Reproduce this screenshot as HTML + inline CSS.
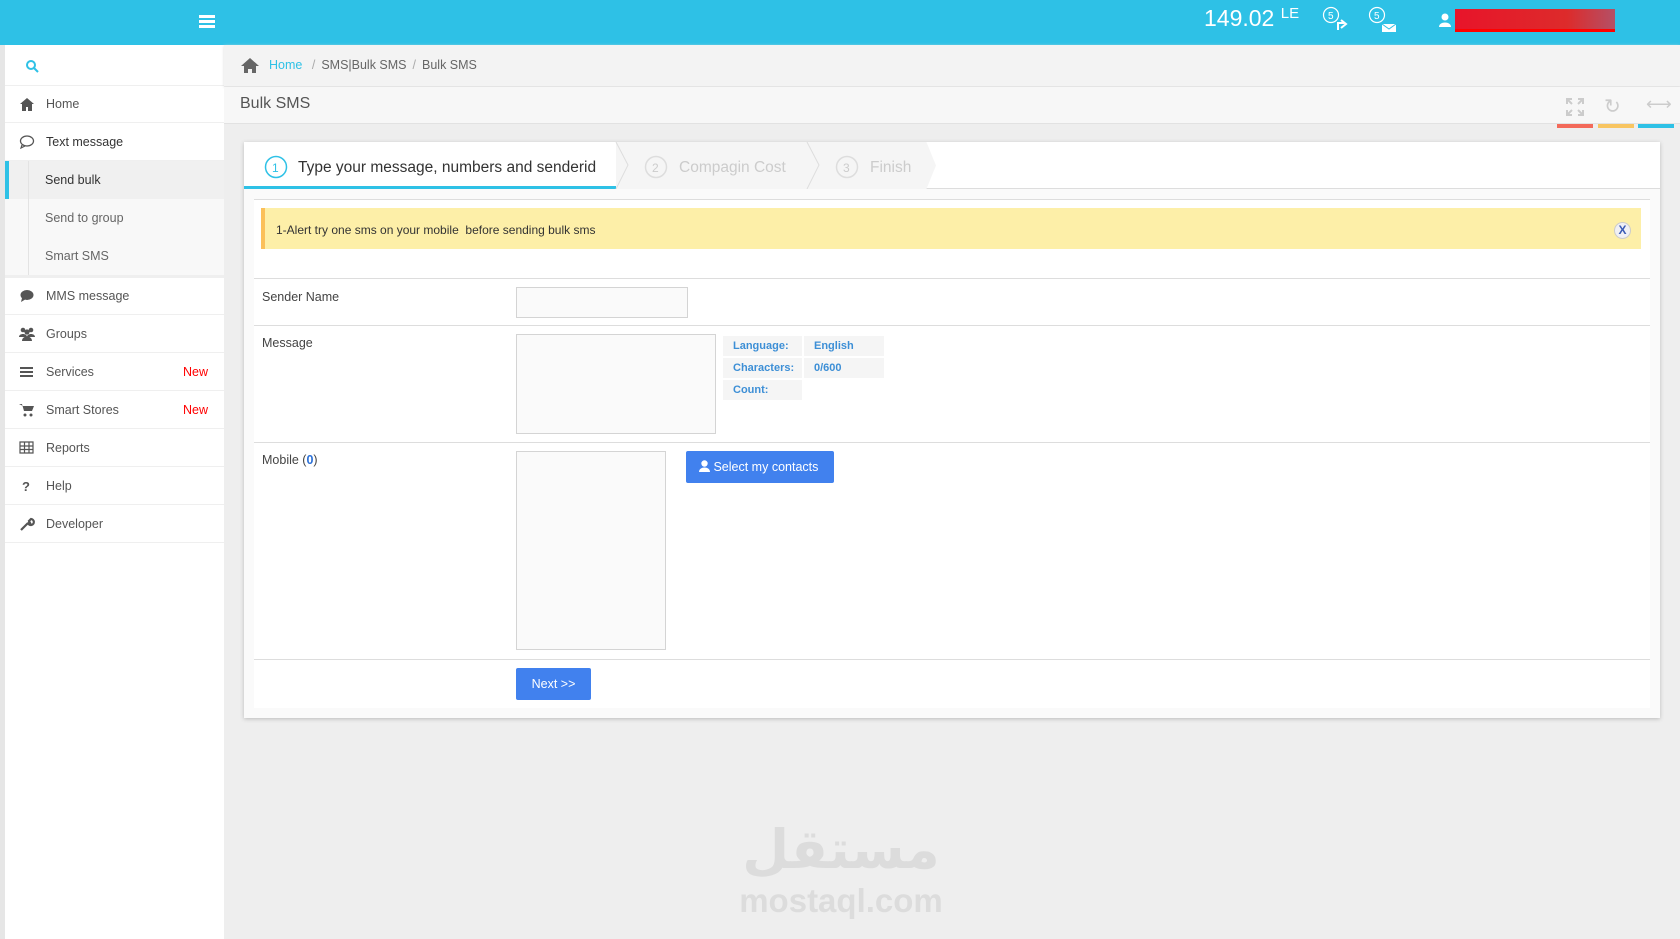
<!DOCTYPE html>
<html><head><meta charset="utf-8"><style>
*{margin:0;padding:0;box-sizing:border-box}
body{width:1680px;height:939px;overflow:hidden;background:#eeeeee;font-family:"Liberation Sans",sans-serif;font-size:12.5px;color:#555;position:relative}
.abs{position:absolute}
#hdr{left:0;top:0;width:1680px;height:45px;background:#2ec1e6}
#side{left:0;top:45px;width:224px;height:894px;background:#fff;border-left:5px solid #e6e6e6}
.it{position:absolute;left:0;width:219px;height:38px;border-bottom:1px solid #efefef;line-height:38px;padding-left:41px;color:#555}
.it svg{position:absolute;left:14px;top:12px}
.new{position:absolute;right:16px;color:#f00}
.sub{position:absolute;left:0;width:219px;height:38px;line-height:38px;padding-left:40px;color:#666;background:#f8f8f8}
.row{position:absolute;left:254px;width:1396px;border-top:1px solid #ddd}
.lbl{position:absolute;left:262px;color:#444}
.inp{position:absolute;background:#fafafa;border:1px solid #d4d4d4}
.cell{position:absolute;background:#f5f5f5;color:#3d8fd6;font-weight:bold;font-size:11px;line-height:20px;padding-left:10px}
</style></head><body>
<div id="hdr" class="abs">
 <div class="abs" style="left:199px;top:15px;width:16px;height:3px;background:#fff;box-shadow:0 5px 0 #fff,0 10px 0 #fff"></div>
 <div class="abs" style="left:1204px;top:5px;color:#fff;font-size:23px">149.02 <sup style="font-size:15px;vertical-align:8px">LE</sup></div>
 <svg class="abs" style="left:1322px;top:6px" width="30" height="26"><circle cx="9" cy="9" r="7.5" fill="none" stroke="#fff" stroke-width="1.2"/><text x="6" y="13" font-size="10" fill="#fff" font-family="Liberation Sans">5</text><path d="M16 24v-7h6M19 14l5 4-5 4" fill="none" stroke="#fff" stroke-width="2"/></svg>
 <svg class="abs" style="left:1368px;top:6px" width="30" height="26"><circle cx="9" cy="9" r="7.5" fill="none" stroke="#fff" stroke-width="1.2"/><text x="6" y="13" font-size="10" fill="#fff" font-family="Liberation Sans">5</text><path d="M14 18h14v8H14z" fill="#fff"/><path d="M14 18l7 5 7-5" stroke="#2ec1e6" fill="none"/></svg>
 <svg class="abs" style="left:1439px;top:13px" width="12" height="14"><circle cx="6" cy="4" r="3.5" fill="#fff"/><path d="M0 14c0-6 12-6 12 0z" fill="#fff"/></svg>
 <div class="abs" style="left:1455px;top:9px;width:160px;height:23px;background:linear-gradient(90deg,#e8142a,#dd2b2b 70%,#b45066);border-bottom:3px solid #f00"></div>
</div>
<div id="side" class="abs">
 <svg class="abs" style="left:20px;top:14px" width="14" height="14"><circle cx="6" cy="6" r="4" fill="none" stroke="#2ec1e6" stroke-width="2"/><path d="M9 9l4 4" stroke="#2ec1e6" stroke-width="2"/></svg>
 <div class="abs" style="left:0;top:40px;width:219px;border-top:1px solid #efefef"></div>
 <div class="it" style="top:40px"><svg width="16" height="14"><path d="M8 1l7 6h-2v7h-4v-4H7v4H3V7H1z" fill="#555"/></svg>Home</div>
 <div class="it" style="top:78px;color:#333"><svg width="16" height="14"><ellipse cx="8" cy="6" rx="6.5" ry="5" fill="none" stroke="#555" stroke-width="1.3"/><path d="M3 10l-1 3 4-2" fill="none" stroke="#555" stroke-width="1.2"/></svg>Text message</div>
 <div class="sub" style="top:116px;background:#f0f0f0;color:#333;border-left:4px solid #2ec1e6;padding-left:36px">Send bulk</div>
 <div class="sub" style="top:154px">Send to group</div>
 <div class="sub" style="top:192px">Smart SMS</div>
 <div class="abs" style="left:23px;top:116px;height:114px;border-left:1px solid #e3e3e3"></div>
 <div class="abs" style="left:0;top:230px;width:219px;height:3px;background:#efefef"></div>
 <div class="it" style="top:232px"><svg width="16" height="14"><ellipse cx="8" cy="6" rx="6.5" ry="5" fill="#555"/><path d="M3 9l-1 4 5-3" fill="#555"/></svg>MMS message</div>
 <div class="it" style="top:270px"><svg width="16" height="14"><circle cx="4" cy="3" r="2.3" fill="#555"/><circle cx="12" cy="3" r="2.3" fill="#555"/><circle cx="8" cy="5" r="2.6" fill="#555"/><path d="M0 10c0-4 8-4 8 0zM8 10c0-4 8-4 8 0zM3 14c0-6 10-6 10 0z" fill="#555"/></svg>Groups</div>
 <div class="it" style="top:308px"><svg width="16" height="14"><path d="M1 3h13M1 7h13M1 11h13" stroke="#555" stroke-width="2"/></svg>Services<span class="new">New</span></div>
 <div class="it" style="top:346px"><svg width="16" height="14"><path d="M0 1h3l2 7h8l2-5H4" fill="#555"/><circle cx="6" cy="12" r="1.5" fill="#555"/><circle cx="12" cy="12" r="1.5" fill="#555"/></svg>Smart Stores<span class="new">New</span></div>
 <div class="it" style="top:384px"><svg width="16" height="14"><path d="M1 1h13v11H1zM1 5h13M1 8.5h13M5.5 1v11M10 1v11" fill="none" stroke="#555" stroke-width="1.2"/></svg>Reports</div>
 <div class="it" style="top:422px"><svg width="16" height="14"><text x="3" y="12" font-size="13" font-weight="bold" fill="#555" font-family="Liberation Sans">?</text></svg>Help</div>
 <div class="it" style="top:460px"><svg width="16" height="14"><path d="M2 13l7-7M9 6a3 3 0 1 0 3-4l-2 2 1 2-2-1" stroke="#555" stroke-width="2.2" fill="none"/></svg>Developer</div>
</div>
<div class="abs" style="left:224px;top:45px;width:1456px;height:41px;background:#f3f3f3;box-shadow:0 1px 3px #ddd"></div>
<svg class="abs" style="left:240px;top:57px" width="20" height="16"><path d="M10 1l9 8h-3v7h-4v-4H8v4H4V9H1z" fill="#666"/></svg>
<div class="abs" style="left:269px;top:58px;color:#2ec1e6">Home <span style="color:#aaa;margin:0 6px">/</span><span style="color:#666">SMS|Bulk SMS</span><span style="color:#aaa;margin:0 6px">/</span><span style="color:#666">Bulk SMS</span></div>
<div class="abs" style="left:224px;top:87px;width:1456px;height:37px;background:#f7f7f7;border-bottom:1px solid #e2e2e2"></div>
<div class="abs" style="left:240px;top:95px;font-size:16px;color:#555">Bulk SMS</div>
<svg class="abs" style="left:1566px;top:98px" width="18" height="18"><path d="M1 6V1h5M12 1h5v5M17 12v5h-5M6 17H1v-5M1 1l5 5M17 1l-5 5M17 17l-5-5M1 17l5-5" fill="none" stroke="#ccc" stroke-width="2"/></svg>
<div class="abs" style="left:1604px;top:94px;color:#ccc;font-size:20px">↻</div>
<div class="abs" style="left:1646px;top:94px;color:#ccc;font-size:18px">⟷</div>
<div class="abs" style="left:1557px;top:124px;width:36px;height:4px;background:#f36a5a"></div>
<div class="abs" style="left:1598px;top:124px;width:36px;height:4px;background:#f8c561"></div>
<div class="abs" style="left:1638px;top:124px;width:36px;height:4px;background:#2ec1e6"></div>
<div class="abs" style="left:244px;top:142px;width:1416px;height:576px;background:#fafafa;box-shadow:0 1px 4px #bbb"></div>
<div class="abs" style="left:244px;top:142px;width:1416px;height:47px;background:#fff;border-bottom:1px solid #ddd"></div>
<div class="abs" style="left:616px;top:142px;width:320px;height:47px;background:#f5f5f5;clip-path:polygon(0 0,97% 0,100% 50%,97% 100%,0 100%)"></div>
<div class="abs" style="left:244px;top:186px;width:372px;height:3px;background:#2ec1e6"></div>
<svg class="abs" style="left:244px;top:142px" width="700" height="47"><path d="M372 0l12 23-12 24M563 0l12 23-12 24M751 0l12 23-12 24" fill="none" stroke="#ddd"/>
<circle cx="32" cy="25" r="10.5" fill="none" stroke="#2ec1e6" stroke-width="1.5"/><text x="28" y="30" font-size="12" fill="#2ec1e6" font-family="Liberation Sans">1</text>
<circle cx="412" cy="25" r="10.5" fill="none" stroke="#ddd" stroke-width="1.5"/><text x="408" y="30" font-size="12" fill="#ccc" font-family="Liberation Sans">2</text>
<circle cx="603" cy="25" r="10.5" fill="none" stroke="#ddd" stroke-width="1.5"/><text x="599" y="30" font-size="12" fill="#ccc" font-family="Liberation Sans">3</text></svg>
<div class="abs" style="left:298px;top:159px;font-size:15.5px;color:#333">Type your message, numbers and senderid</div>
<div class="abs" style="left:679px;top:159px;font-size:15.5px;color:#ccc">Compagin Cost</div>
<div class="abs" style="left:870px;top:159px;font-size:15.5px;color:#ccc">Finish</div>
<div class="abs" style="left:254px;top:199px;width:1396px;height:509px;background:#fff;border-top:1px solid #ddd"></div>
<div class="abs" style="left:261px;top:208px;width:1380px;height:41px;background:#fdefa8;border-left:4px solid #fbc05a"></div>
<div class="abs" style="left:276px;top:223px;font-size:12px;color:#333">1-Alert try one sms on your mobile &nbsp;before sending bulk sms</div>
<div class="abs" style="left:1614px;top:222px;width:17px;height:17px;border-radius:50%;border:1px solid #ccc;background:#f0f0f5;color:#3b5bb5;font-weight:bold;font-size:12px;text-align:center;line-height:15px">X</div>
<div class="row" style="top:278px"></div>
<div class="lbl" style="top:290px">Sender Name</div>
<div class="inp" style="left:516px;top:287px;width:172px;height:31px"></div>
<div class="row" style="top:325px"></div>
<div class="lbl" style="top:336px">Message</div>
<div class="inp" style="left:516px;top:334px;width:200px;height:100px"></div>
<div class="cell" style="left:723px;top:336px;width:79px">Language:</div><div class="cell" style="left:804px;top:336px;width:80px">English</div>
<div class="cell" style="left:723px;top:358px;width:79px">Characters:</div><div class="cell" style="left:804px;top:358px;width:80px">0/600</div>
<div class="cell" style="left:723px;top:380px;width:79px">Count:</div><div class="cell" style="left:804px;top:380px;width:80px"></div>
<div class="row" style="top:442px"></div>
<div class="lbl" style="top:453px">Mobile (<span style="color:#2a6fd6;font-weight:bold">0</span>)</div>
<div class="inp" style="left:516px;top:451px;width:150px;height:199px"></div>
<div class="abs" style="left:686px;top:451px;width:148px;height:32px;background:#4181ee;border-radius:2px;color:#fff;line-height:32px;padding-left:13px"><svg width="11" height="12" style="vertical-align:-1px"><circle cx="5.5" cy="3.5" r="3.2" fill="#fff"/><path d="M0 12c0-6 11-6 11 0z" fill="#fff"/></svg> Select my contacts</div>
<div class="row" style="top:659px"></div>
<div class="abs" style="left:516px;top:668px;width:75px;height:32px;background:#4181ee;border-radius:2px;color:#fff;line-height:32px;text-align:center">Next &gt;&gt;</div>
<div class="abs" style="left:738px;top:815px;width:206px;text-align:center;font-family:'DejaVu Sans',sans-serif;font-weight:bold;font-size:54px;color:#dcdcdc;line-height:70px">مستقل</div>
<div class="abs" style="left:738px;top:882px;width:206px;text-align:center;font-weight:bold;font-size:33px;color:#dcdcdc;line-height:38px">mostaql.com</div>
</body></html>
